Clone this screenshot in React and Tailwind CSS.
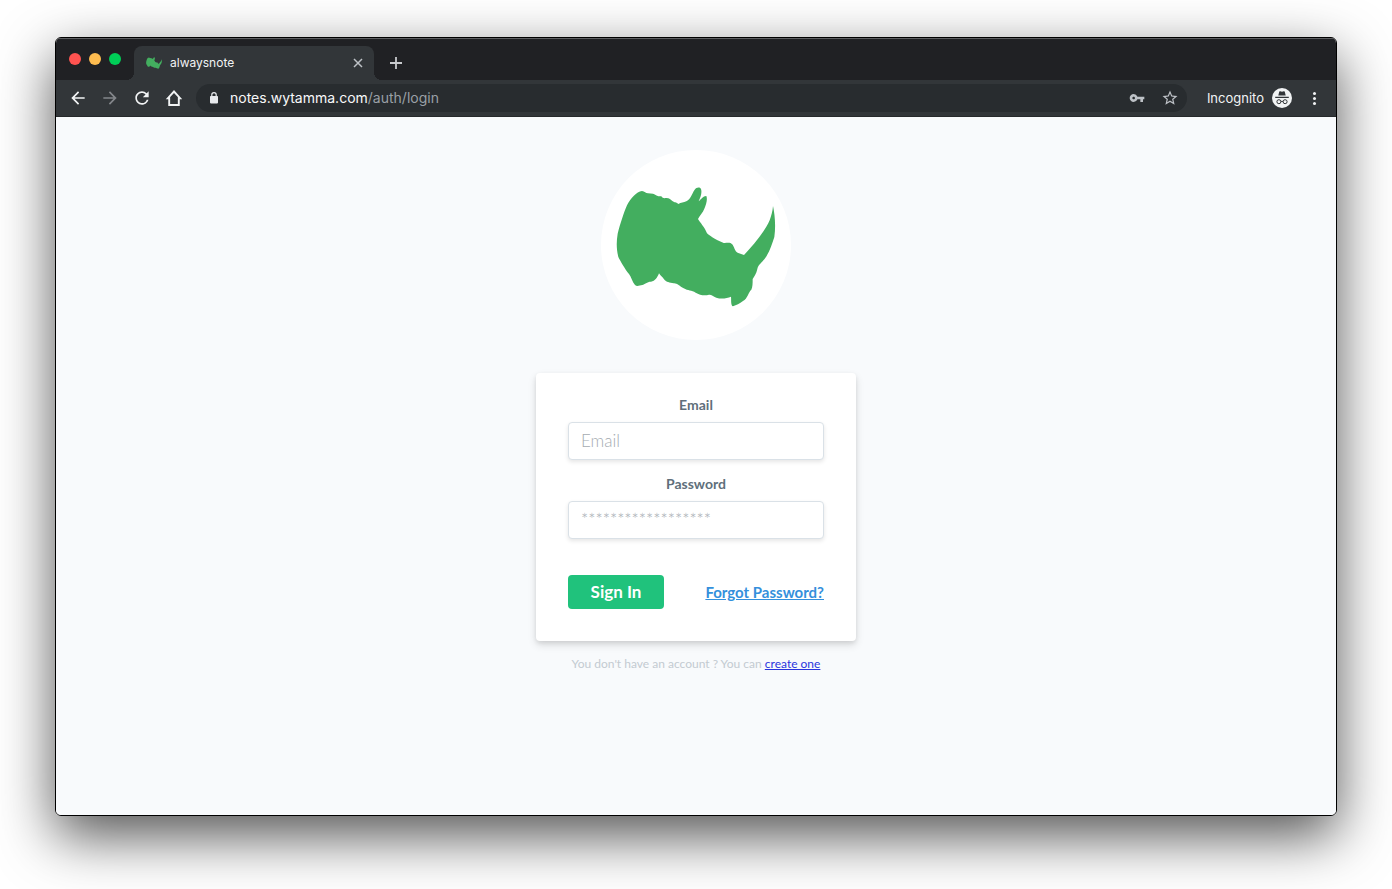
import React from "react";
import { MdArrowBack, MdArrowForward, MdRefresh, MdVpnKey, MdStarBorder } from "react-icons/md";

function RhinoShape() {
  return (
    <path
      fill="#43ae5f"
      d="M157 152C165 153 168 159 175 159L190 160C198 163 204 169 215 168C220 174 222 174 230 173C240 173 243 178 248 182C256 188 258 184 266 191C274 187 282 187 290 183C305 175 306 160 315 148C320 141 330 139 334 146C338 158 332 172 327 183C333 178 342 166 350 167C354 176 350 192 344 205C340 216 330 226 325 236C330 245 346 262 352 279C365 290 385 302 402 308C412 309 420 304 429 313C436 325 436 335 448 339L463 344C490 315 525 275 540 240C545 225 549 212 550 197C555 220 559 255 554 290C546 315 540 335 524 357C515 368 505 374 503 386C500 400 494 408 489 416C489 430 489 440 485 448C476 455 474 475 460 482C450 490 440 494 430 498C423 495 425 482 424 469C412 474 395 477 380 472C370 468 365 462 358 463C345 467 330 464 318 457C306 449 295 452 282 444C270 438 262 428 252 429C240 427 230 426 223 417C218 409 213 408 208 399C204 410 196 423 184 424C172 424 165 432 158 434C150 434 143 440 136 434C128 425 125 410 118 401C105 385 92 362 86 350C80 325 80 305 84 280C92 250 103 215 112 195C124 172 140 155 157 152Z"
    />
  );
}

function HomeIcon() {
  return (
    <svg viewBox="0 0 20 20" className="size-5" fill="none" stroke="currentColor" strokeWidth="1.9" aria-hidden="true">
      <path d="M3.9 10.2H5.2V17H14.8V10.2H16.1L10 3.5Z" />
    </svg>
  );
}

function IncognitoIcon() {
  return (
    <svg viewBox="0 0 20 20" className="size-5" aria-hidden="true">
      <circle cx="10" cy="10" r="10" fill="#f1f3f4" />
      <path d="M6.3 7.4L7.3 3.6Q7.6 3 8.2 3.2L10 3.8L11.8 3.2Q12.4 3 12.7 3.6L13.7 7.4Z" fill="#323639" />
      <path d="M3.2 9.4H16.8" stroke="#323639" strokeWidth="1.1" />
      <g fill="none" stroke="#323639" strokeWidth="1">
        <circle cx="6.9" cy="13.7" r="2" />
        <circle cx="13.1" cy="13.7" r="2" />
        <path d="M8.9 13.6Q10 12.8 11.1 13.6" />
      </g>
    </svg>
  );
}

function TabStrip() {
  return (
    <div className="flex h-[42px] items-end bg-[#202124] border-t border-[#5d5e61]">
      <div className="flex h-[34px] w-[78px] shrink-0 gap-2 pt-[7px] pl-[13px]">
        <button aria-label="Close window" className="size-3 rounded-full bg-[#ff5350]" />
        <button aria-label="Minimize window" className="size-3 rounded-full bg-[#febc4f]" />
        <button aria-label="Zoom window" className="size-3 rounded-full bg-[#00ce57]" />
      </div>
      <div className="relative flex h-[34px] w-60 items-center rounded-t-lg bg-[#323639] pl-3 pr-2 text-xs text-[#f1f3f4]">
        <span className="absolute bottom-0 -left-2 size-2 bg-[radial-gradient(circle_at_0_0,#202124_8px,#323639_8px)]" />
        <span className="absolute bottom-0 -right-2 size-2 bg-[radial-gradient(circle_at_100%_0,#202124_8px,#323639_8px)]" />
        <svg viewBox="78 130 482 380" className="mr-2 h-4 w-4" aria-hidden="true">
          <RhinoShape />
        </svg>
        <span className="flex-1">alwaysnote</span>
        <button aria-label="Close tab" className="grid size-4 place-items-center text-[#bdc1c6]">
          <svg viewBox="0 0 10 10" className="size-[10px]" stroke="currentColor" strokeWidth="1.5" aria-hidden="true">
            <path d="M1 1L9 9M9 1L1 9" />
          </svg>
        </button>
      </div>
      <button aria-label="New tab" className="ml-3 grid h-[34px] w-5 place-items-center text-[#c8cacd]">
        <svg viewBox="0 0 12 12" className="size-3" stroke="currentColor" strokeWidth="1.8" aria-hidden="true">
          <path d="M6 0V12M0 6H12" />
        </svg>
      </button>
    </div>
  );
}

function Toolbar() {
  return (
    <div className="flex h-[37px] items-center border-b border-[#26292b] bg-[#323639] px-3 text-[#f1f3f4]">
      <div className="flex shrink-0 gap-3">
        <button aria-label="Back" className="size-5"><MdArrowBack className="size-5" /></button>
        <button aria-label="Forward" className="size-5 text-[#83868a]"><MdArrowForward className="size-5" /></button>
        <button aria-label="Reload" className="size-5"><MdRefresh className="size-5" /></button>
        <button aria-label="Home" className="size-5"><HomeIcon /></button>
      </div>
      <div className="ml-3 flex h-7 min-w-0 flex-1 items-center rounded-full bg-[#282c2f] pl-3 pr-2">
        <svg viewBox="0 0 12 14" className="h-[14px] w-3 shrink-0 text-[#e8eaed]" aria-hidden="true">
          <rect x="2" y="5" width="8" height="7.4" rx="0.8" fill="currentColor" />
          <path d="M3.8 5.4V3.8A2.2 2.2 0 0 1 8.2 3.8V5.4" fill="none" stroke="currentColor" strokeWidth="1.2" />
        </svg>
        <div className="ml-[10px] flex-1 truncate text-sm text-[#9aa0a6]">
          <span className="text-[#f8f9fa]">notes.wytamma.com</span>/auth/login
        </div>
        <button aria-label="Saved passwords" className="mr-4 text-[#bdc1c6]"><MdVpnKey className="size-4" /></button>
        <button aria-label="Bookmark this page" className="text-[#bdc1c6]"><MdStarBorder className="size-[18px]" /></button>
      </div>
      <button className="ml-5 flex shrink-0 items-center gap-2 text-[13px] leading-5">
        Incognito
        <IncognitoIcon />
      </button>
      <button aria-label="Browser menu" className="ml-3">
        <svg viewBox="0 0 20 20" className="size-5" fill="currentColor" aria-hidden="true">
          <circle cx="10.5" cy="5.5" r="1.5" />
          <circle cx="10.5" cy="10.5" r="1.5" />
          <circle cx="10.5" cy="15.5" r="1.5" />
        </svg>
      </button>
    </div>
  );
}

const labelClass = "block pb-[10px] text-center text-sm leading-[15px] font-bold text-[#606f7b]";
const inputClass =
  "block h-[38px] w-full rounded border border-[#dae1e7] bg-white px-3 pb-px text-[17px] font-light text-[#606f7b] shadow-[0_2px_4px_rgba(0,0,0,0.1)] placeholder:text-[#a5abb1] outline-none";

function LoginPage() {
  return (
    <main className="flex flex-1 flex-col items-center bg-[#f8fafc] px-4 pt-[33px] pb-8 font-[Lato,sans-serif]">
      <svg viewBox="34 29 570 570" className="size-[190px] rounded-full bg-white" role="img" aria-label="alwaysnote">
        <RhinoShape />
      </svg>
      <form
        onSubmit={(e) => e.preventDefault()}
        className="mt-[33px] w-full max-w-80 rounded bg-white px-8 pt-6 pb-8 shadow-[0_4px_8px_rgba(0,0,0,0.12),0_2px_4px_rgba(0,0,0,0.08)]"
      >
        <label htmlFor="email" className={labelClass}>Email</label>
        <input id="email" type="email" placeholder="Email" className={inputClass} />
        <label htmlFor="password" className={"mt-4 " + labelClass}>Password</label>
        <input id="password" type="password" placeholder="******************" className={inputClass} />
        <div className="mt-9 flex items-center justify-between">
          <button type="submit" className="h-[34px] w-24 rounded bg-[#20c27c] pb-px text-[17px] font-bold text-white">Sign In</button>
          <a href="#forgot" className="text-[15px] font-bold text-[#3490dc] underline">Forgot Password?</a>
        </div>
      </form>
      <p className="mt-4 text-xs leading-[14px] text-[#c3cad1]">
        You don't have an account ? You can <a href="#register" className="text-[#2a35dc] underline">create one</a>
      </p>
    </main>
  );
}

export default function App() {
  return (
    <div className="flex min-h-screen bg-white px-[55px] pt-[37px] pb-[73px] font-[Inter,sans-serif]">
      <div className="flex min-w-0 flex-1 flex-col overflow-hidden rounded-md border border-black shadow-[0_20px_56px_rgba(0,0,0,0.68)]">
        <TabStrip />
        <Toolbar />
        <LoginPage />
      </div>
    </div>
  );
}
